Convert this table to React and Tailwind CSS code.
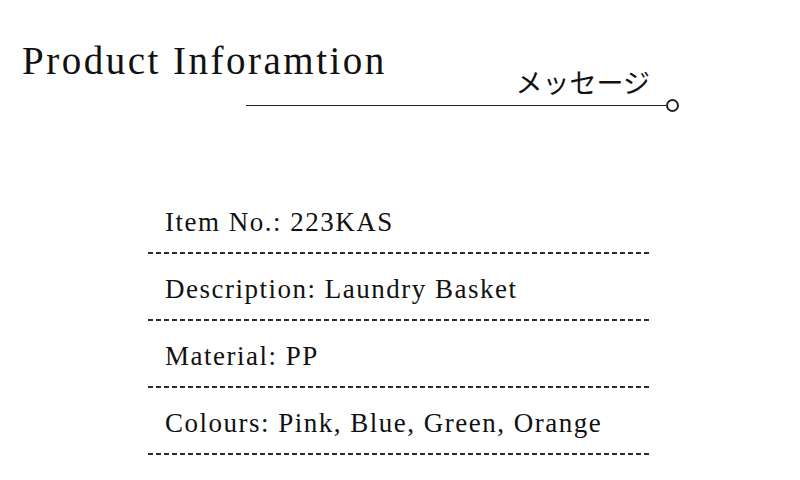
import React from 'react'

const rows = [
  'Item No.: 223KAS',
  'Description: Laundry Basket',
  'Material: PP',
  'Colours: Pink, Blue, Green, Orange',
]

const Dashes = () => (
  <div className="h-[2px] w-full bg-[repeating-linear-gradient(to_right,#2b2b2b_0px,#2b2b2b_5px,transparent_5px,transparent_8px)]" />
)

const App = () => {
  return (
    <div className="w-[800px] h-[480px] bg-white text-[#111] font-['Liberation_Serif',serif] overflow-hidden">
      <div className="pt-[41px] pl-[22px] text-[39px] leading-[39px] tracking-[2.5px] whitespace-pre">Product Inforamtion</div>

      <div className="ml-[246px] w-[433px] -mt-[15px]">
        <div className="flex justify-end pr-[29px]">
          <span className="text-[27px] leading-[34px] font-['Noto_Sans_CJK_JP',sans-serif]">メッセージ</span>
        </div>
        <div className="flex items-center h-[13px]">
          <div className="flex-1 h-[1.5px] bg-[#222]" />
          <div className="w-[13px] h-[13px] rounded-full border-2 border-[#222] shrink-0" />
        </div>
      </div>

      <div className="ml-[148px] w-[504px] mt-[97px] flex flex-col">
        {rows.map((r) => (
          <div key={r} className="flex flex-col">
            <div className="pl-[17px] text-[27px] leading-[27px] tracking-[1.5px] whitespace-pre">{r}</div>
            <div className="h-[16px]" />
            <Dashes />
            <div className="h-[22px]" />
          </div>
        ))}
      </div>
    </div>
  )
}

export default App
